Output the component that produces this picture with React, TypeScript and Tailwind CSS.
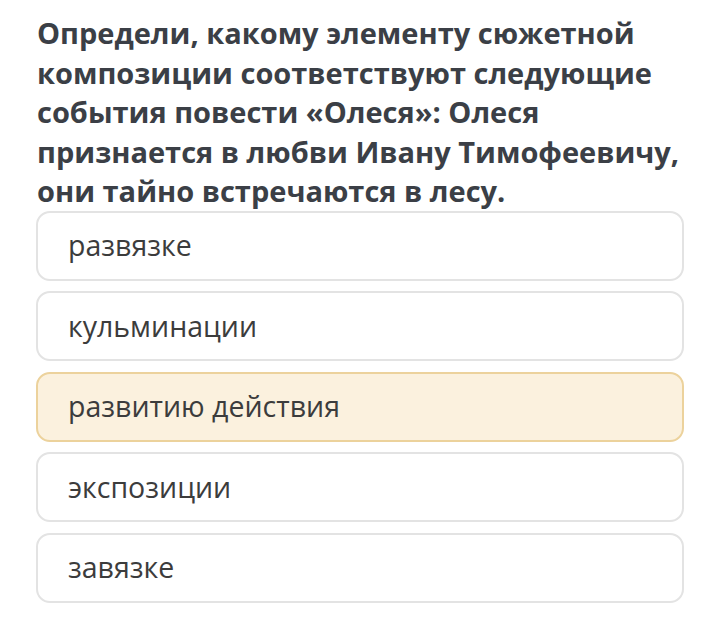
const options = [
  { id: 1, text: "развязке" },
  { id: 2, text: "кульминации" },
  { id: 3, text: "развитию действия", selected: true },
  { id: 4, text: "экспозиции" },
  { id: 5, text: "завязке" },
];

function App() {
  return (
    <div className="min-h-screen bg-white font-['Open_Sans',sans-serif] px-[36px] pt-[13px]">
      <h1 className="text-[29px] leading-[39.5px] font-bold text-[#3b3f46] pl-[1px] w-[670px]">
        Определи, какому элементу сюжетной композиции соответствуют следующие
        события повести «Олеся»: Олеся признается в любви Ивану Тимофеевичу,
        они тайно встречаются в лесу.
      </h1>

      <div className="flex flex-col gap-[10.5px] w-[648px]">
        {options.map((o) => (
          <div
            key={o.id}
            className={
              o.selected
                ? "h-[70px] flex items-center px-[30px] rounded-[14px] border-2 border-[#ecd29c] bg-[#fbf1de] text-[28.5px] text-[#3c3c3c]"
                : "h-[70px] flex items-center px-[30px] rounded-[14px] border-2 border-[#e3e3e3] bg-white text-[28.5px] text-[#3c3c3c]"
            }
          >
            {o.text}
          </div>
        ))}
      </div>
    </div>
  );
}

export default App;
